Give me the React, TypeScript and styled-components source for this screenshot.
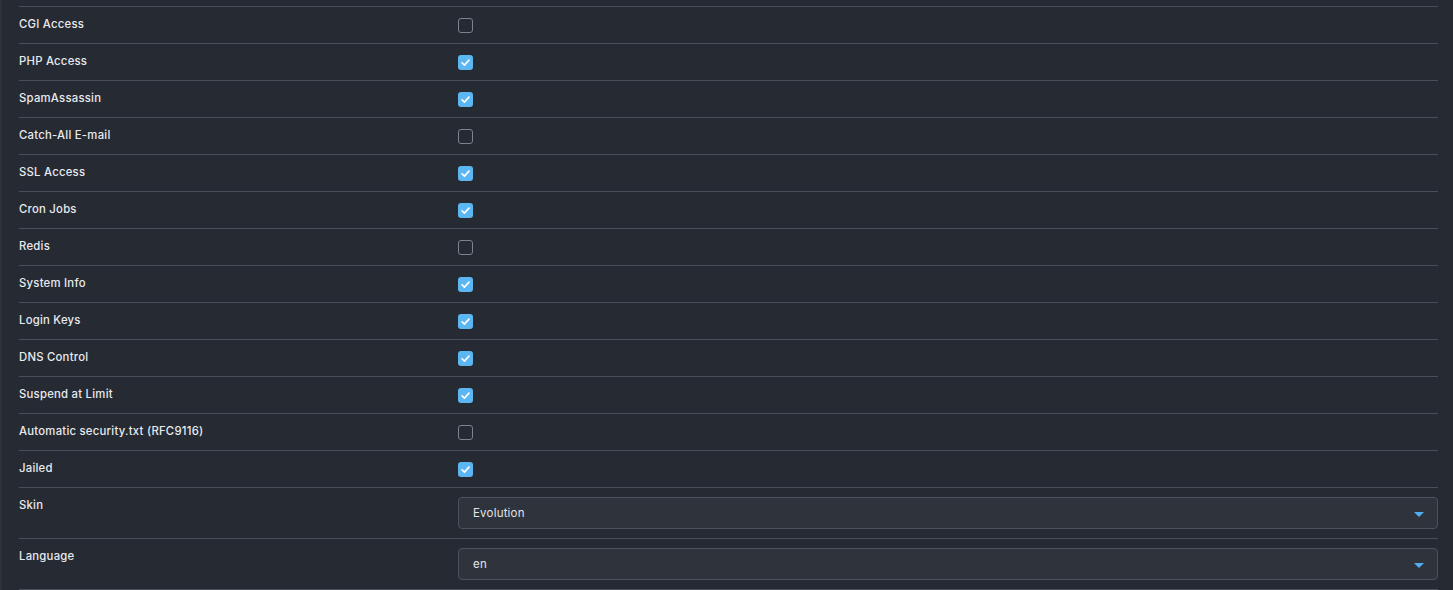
import React from "react";
import styled, { createGlobalStyle } from "styled-components";

const GlobalStyle = createGlobalStyle`
  html, body {
    margin: 0;
    padding: 0;
    background: #262a33;
  }
  body {
    font-family: Inter, "Open Sans", sans-serif;
  }
`;

const Panel = styled.div`
  box-sizing: border-box;
  width: 1453px;
  height: 590px;
  overflow: hidden;
  background: #262a33;
  border-left: 2px solid #2d313a;
  padding: 6px 15px 0 17px;
`;

const Table = styled.div`
  display: flex;
  flex-direction: column;
`;

const Row = styled.div<{ $tall?: boolean }>`
  display: grid;
  grid-template-columns: 439px 1fr;
  border-top: 1px solid #4a4e58;
  height: ${(p) => (p.$tall ? "50px" : "36px")};
  align-items: ${(p) => (p.$tall ? "start" : "center")};
  &:last-child {
    border-bottom: 1px solid #4a4e58;
  }
`;

const Label = styled.div<{ $tall?: boolean }>`
  color: #e8eaee;
  font-size: 11.3px;
  font-weight: 500;
  letter-spacing: 0.25px;
  padding-top: ${(p) => (p.$tall ? "10px" : "0")};
  margin-top: ${(p) => (p.$tall ? "0" : "-2px")};
`;

const CheckCell = styled.div`
  display: flex;
`;

const Box = styled.span<{ $checked: boolean }>`
  box-sizing: border-box;
  display: inline-flex;
  align-items: center;
  justify-content: center;
  width: 15px;
  height: 15px;
  border-radius: 3px;
  background: ${(p) => (p.$checked ? "#5cb6f2" : "transparent")};
  border: ${(p) => (p.$checked ? "none" : "1px solid #7d828d")};
`;

const Select = styled.div`
  box-sizing: border-box;
  margin-top: 9px;
  height: 32px;
  border: 1px solid #4c515c;
  border-radius: 4px;
  background: #2f333c;
  display: flex;
  align-items: center;
  justify-content: space-between;
  padding: 0 13px 0 14px;
  color: #e2e4e8;
  font-size: 11.5px;
  letter-spacing: 0.2px;
`;

const Caret = styled.span`
  width: 0;
  height: 0;
  border-left: 5px solid transparent;
  border-right: 5px solid transparent;
  border-top: 5px solid #4eaef0;
  margin-top: 2px;
`;

const Check = ({ checked }: { checked: boolean }) => (
  <Box $checked={checked}>
    {checked && (
      <svg width="11" height="11" viewBox="0 0 12 12">
        <path d="M2.2 6.3 L4.8 8.8 L9.8 3.4" fill="none" stroke="#fff" strokeWidth="1.8" strokeLinecap="round" strokeLinejoin="round" />
      </svg>
    )}
  </Box>
);

const rows: [string, boolean][] = [
  ["CGI Access", false],
  ["PHP Access", true],
  ["SpamAssassin", true],
  ["Catch-All E-mail", false],
  ["SSL Access", true],
  ["Cron Jobs", true],
  ["Redis", false],
  ["System Info", true],
  ["Login Keys", true],
  ["DNS Control", true],
  ["Suspend at Limit", true],
  ["Automatic security.txt (RFC9116)", false],
  ["Jailed", true],
];

export default function App() {
  return (
    <>
      <GlobalStyle />
      <Panel>
        <Table>
          {rows.map(([label, checked]) => (
            <Row key={label}>
              <Label>{label}</Label>
              <CheckCell>
                <Check checked={checked} />
              </CheckCell>
            </Row>
          ))}
          <Row $tall>
            <Label $tall>Skin</Label>
            <Select>
              <span>Evolution</span>
              <Caret />
            </Select>
          </Row>
          <Row $tall>
            <Label $tall>Language</Label>
            <Select>
              <span>en</span>
              <Caret />
            </Select>
          </Row>
        </Table>
      </Panel>
    </>
  );
}
